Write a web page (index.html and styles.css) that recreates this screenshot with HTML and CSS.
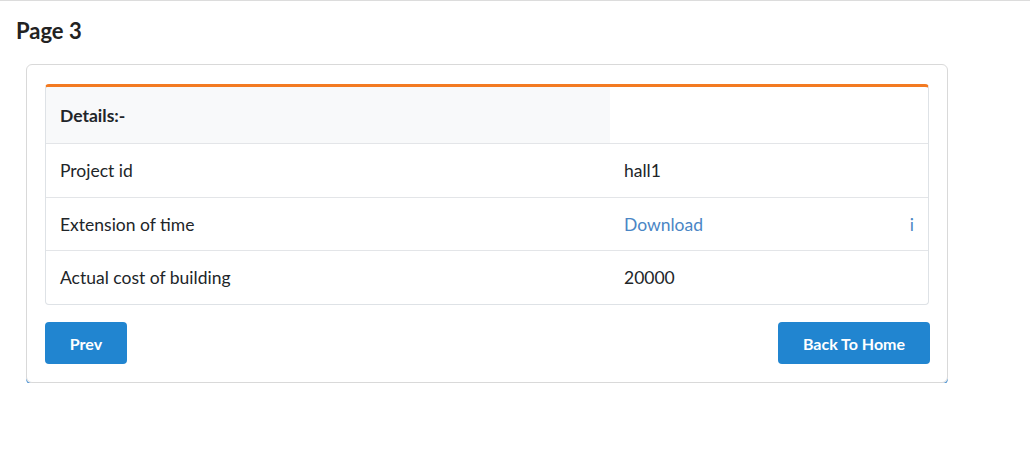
FILE: index.html
```html
<!DOCTYPE html>
<html>
<head>
<meta charset="utf-8">
<link rel="stylesheet" href="styles.css">
</head>
<body>
<div class="topline"></div>
<h1 class="page-title">Page 3</h1>
<div class="card">
  <div class="details">
    <div class="row head">
      <div class="cell label head-cell">Details:-</div>
      <div class="cell value"></div>
    </div>
    <div class="row">
      <div class="cell label">Project id</div>
      <div class="cell value">hall1</div>
    </div>
    <div class="row short">
      <div class="cell label">Extension of time</div>
      <div class="cell value link-cell"><a class="link" href="#">Download</a><span class="info">i</span></div>
    </div>
    <div class="row last">
      <div class="cell label">Actual cost of building</div>
      <div class="cell value">20000</div>
    </div>
  </div>
  <div class="actions">
    <button class="btn prev">Prev</button>
    <button class="btn home">Back To Home</button>
  </div>
</div>
</body>
</html>
```
FILE: styles.css
```css
* { box-sizing: border-box; }
html, body { margin: 0; padding: 0; background: #fff; }
body {
  font-family: Lato, "Liberation Sans", sans-serif;
  color: #212529;
  width: 1030px;
}
.topline {
  border-top: 1px solid #dcdcdc;
}
.page-title {
  margin: 16px 0 0 16px;
  font-size: 22px;
  font-weight: 700;
  line-height: 28px;
  color: #222;
}
.card {
  margin: 19px 0 0 26px;
  width: 922px;
  border: 1px solid #d9d9d9;
  border-radius: 6px;
  padding: 19px 18px 18px 18px;
  box-shadow: 0 2px 0 0 #5b9bd5;
}
.details {
  border: 1px solid #dee2e6;
  border-top: 3px solid #f37a21;
  border-radius: 4px;
  overflow: hidden;
}
.row {
  display: flex;
  height: 54px;
  border-bottom: 1px solid #e3e5e8;
}
.row.head { height: 57px; }
.row.short { height: 53px; }
.row.last { border-bottom: none; height: 53px; }
.cell {
  display: flex;
  align-items: center;
  font-size: 17.5px;
}
.label {
  width: 564px;
  padding-left: 14px;
}
.value {
  flex: 1;
  padding-left: 14px;
  padding-right: 14px;
}
.head-cell {
  background: #f8f9fa;
  font-weight: 700;
}
.link-cell { justify-content: space-between; }
.link {
  color: #4a86c5;
  text-decoration: none;
}
.info {
  color: #4a86c5;
}
.actions {
  display: flex;
  justify-content: space-between;
  margin-top: 17px;
}
.btn {
  border: none;
  border-radius: 4px;
  background: #2185d0;
  color: #fff;
  font-family: Lato, "Liberation Sans", sans-serif;
  font-weight: 700;
  font-size: 16px;
  height: 42px;
}
.prev { width: 82px; }
.home { width: 152px; margin-right: -1px; }
```
